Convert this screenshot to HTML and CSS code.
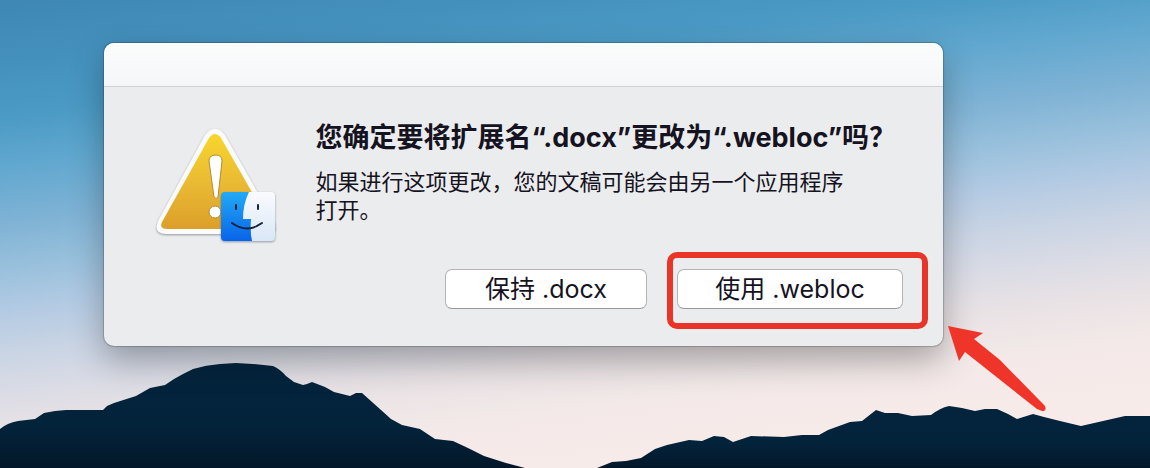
FILE: index.html
```
<!DOCTYPE html>
<html lang="zh-CN">
<head>
  <meta charset="UTF-8">
  <meta name="viewport" content="width=device-width, initial-scale=1.0">
  <title>更改扩展名</title>
  <link rel="stylesheet" href="styles.css">
</head>
<body>
  <svg class="mountains" viewBox="0 360 1150 108" preserveAspectRatio="none" aria-hidden="true">
    <defs>
      <linearGradient id="rock" x1="0" y1="0" x2="0" y2="1">
        <stop offset="0" stop-color="#04243d" />
        <stop offset="0.6" stop-color="#03233b" />
        <stop offset="1" stop-color="#031729" />
      </linearGradient>
    </defs>
    <path fill="url(#rock)" d="M0 468V429Q7 423 18 421L35 419 44 413 55 411 66 410 85 410 103 410 107 406 114 403 136 396 150 388 165 385 174 379 183 374 193 369Q206 365 220 364L236 363 253 364 273 366Q280 369 286 376L294 382 303 385 307 384 312 382 325 387 334 392 350 396 356 393 362 393 381 410 391 419 402 425 420 429 435 439 453 441 468 448 484 456 506 463 525 468Z" />
    <path fill="url(#rock)" d="M597 468L612 462 626 461 641 458 655 449 667 445 689 440 702 441 714 436 724 437 733 442 751 436 784 437 802 435 819 435 828 430 850 422 862 421 876 410 885 413 898 413 912 416 931 415 Q940 408 949 406L962 408 975 411 985 409 997 409 1008 414 1017 419 1033 414 1044 417 1060 421 1081 426 1103 421 1125 416 1150 416V468Z" />
  </svg>

  <main class="dialog" role="alertdialog" aria-labelledby="titulo" aria-describedby="texto">
    <div class="titlebar"></div>
    <div class="content">
      <!-- warning + Finder -->
      <svg class="icon" viewBox="0 0 126 120" aria-hidden="true">
        <defs>
          <linearGradient id="amber" x1="0" y1="0" x2="0" y2="1">
            <stop offset="0" stop-color="#f8d62c" />
            <stop offset="0.5" stop-color="#eabb34" />
            <stop offset="1" stop-color="#dc9f2a" />
          </linearGradient>
          <linearGradient id="blue" x1="0" y1="0" x2="0" y2="1">
            <stop offset="0" stop-color="#22aaf5" />
            <stop offset="1" stop-color="#0964ea" />
          </linearGradient>
          <linearGradient id="pale" x1="0" y1="0" x2="0" y2="1">
            <stop offset="0" stop-color="#fafbfe" />
            <stop offset="1" stop-color="#d9e7f7" />
          </linearGradient>
          <clipPath id="face"><rect x="67" y="67" width="54" height="49" rx="4" /></clipPath>
        </defs>
        <path class="shadow" fill="#fbfbfc" d="M51 10Q61 -3 71 10L120 96Q125 109 112 109H12Q-1 109 4 96Z" />
        <path fill="url(#amber)" d="M55 13Q61 5 67 13L115 97Q118 104 110 104H13Q5 104 8 97Z" />
        <path fill="#fff" stroke="#b98a2d" stroke-width="1" d="M55 36Q55 30 62 30Q68 30 68 36L64 72Q62 75 60 72Z" />
        <circle cx="61" cy="87" r="6" fill="#fff" stroke="#b98a2d" />
        <g class="shadow">
          <g clip-path="url(#face)">
            <rect x="67" y="67" width="32" height="49" fill="url(#blue)" />
            <path fill="url(#pale)" d="M95 67H121V116H98Q96 107 97 94H89Q89 79 95 67Z" />
          </g>
          <path fill="none" stroke="#17233b" stroke-width="2" stroke-linecap="round" d="M82 80V84M104 80V84M78 98Q93 109 108 98" />
        </g>
      </svg>
      <div class="message">
        <h1 id="titulo">您确定要将扩展名“.docx”更改为“.webloc”吗？</h1>
        <p id="texto">如果进行这项更改，您的文稿可能会由另一个应用程序打开。</p>
      </div>
    </div>
    <div class="buttons">
      <button type="button" class="keep">保持 .docx</button>
      <div class="marked">
        <button type="button" class="use">使用 .webloc</button>
      </div>
    </div>
    <svg class="arrow" viewBox="0 0 100 88" aria-hidden="true">
      <path d="M0 0L35 7 26 13 52 34 97 80Q99 85 94 85L89 83 17 26 11 35Z" />
    </svg>
  </main>
</body>
</html>
```
FILE: styles.css
```
* {
  box-sizing: border-box;
}

body {
  position: relative;
  margin: 0;
  min-height: 100vh;
  padding: 43px 18% 24px 9%;
  overflow: hidden;
  font-family: Inter, 'Noto Sans CJK SC', sans-serif;
  color: #15131f;
  background: linear-gradient(173deg, #3f88b5 1%, #4490bd 10%, #4a9ac5 19%, #60a7cf 27%, #80b3d5 37%, #98c0dc 44%, #b3cae3 51%, #c9d4e4 58%, #dbdce5 65%, #e9e2e5 71%, #f3e9e8 79%, #f7ebe9 87%, #f8eae8 100%);
}

.mountains {
  position: absolute;
  left: 0;
  bottom: 0;
  width: 100%;
  height: 108px;
}

/* Dialog */
.dialog {
  position: relative;
  background-color: #ebeced;
  border-radius: 10px;
  box-shadow: 0 0 1px 1px rgba(0, 0, 0, 0.2), 0 14px 34px rgba(0, 0, 0, 0.3);
}

.titlebar {
  height: 44px;
  background: linear-gradient(#fbfcfc, #f5f6f7);
  border-bottom: 1px solid #cfd0d2;
  border-radius: 10px 10px 0 0;
}

.content {
  display: flex;
  gap: 36px;
  padding: 35px 52px 0 50px;
}

.icon {
  flex: none;
  width: 126px;
  height: 120px;
  margin-top: 3px;
}

.shadow {
  filter: drop-shadow(0 1px 1px rgba(60, 65, 90, 0.5));
}

.message {
  flex: 1;
  min-width: 0;
}

h1 {
  margin: 0;
  font-size: 27px;
  line-height: 32px;
  font-weight: 700;
  white-space: nowrap;
}

p {
  max-width: 540px;
  margin: 14px 0 0;
  font-size: 22px;
  line-height: 28px;
}

/* Buttons */
.buttons {
  display: flex;
  justify-content: flex-end;
  gap: 30px;
  padding: 24px 40px 37px;
}

button {
  height: 40px;
  padding: 0;
  border: 1px solid #b4b4b8;
  border-bottom-color: #98989c;
  border-radius: 7px;
  background-color: #fff;
  color: #15131f;
  font-family: inherit;
  font-size: 25px;
  line-height: 36px;
}

.keep {
  width: 202px;
}

.use {
  width: 226px;
}

.marked {
  position: relative;
}

.marked::after {
  content: '';
  position: absolute;
  inset: -17px -25px -20px -10px;
  border: 6px solid #e93428;
  border-radius: 10px;
  pointer-events: none;
}

.arrow {
  position: absolute;
  top: 283px;
  left: 100%;
  width: 100px;
  height: 88px;
  margin-left: 5px;
  fill: #ef3529;
}
```
